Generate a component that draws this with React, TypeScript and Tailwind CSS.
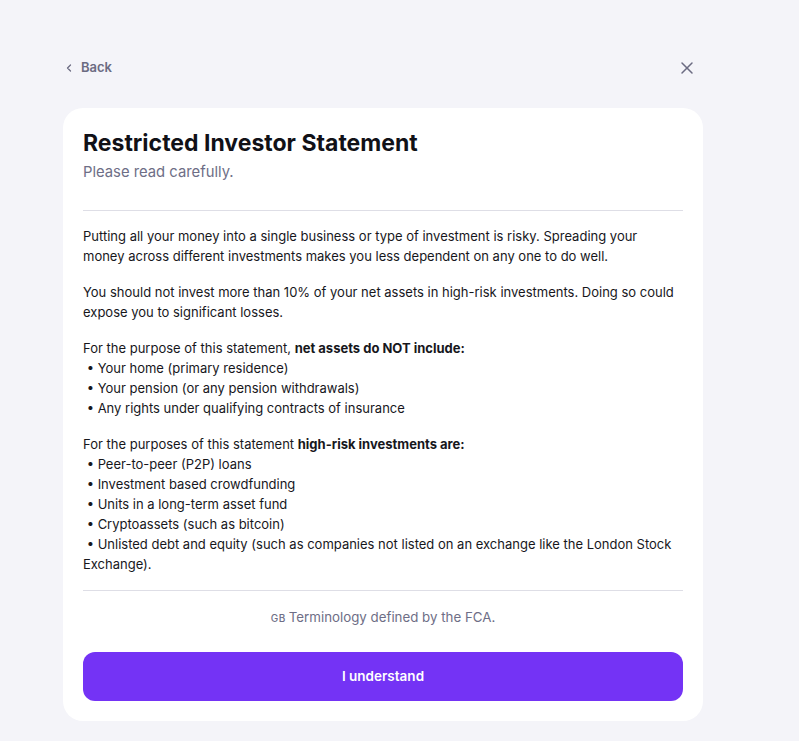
import { ChevronLeft, X } from "lucide-react";

const netAssets = [
  "Your home (primary residence)",
  "Your pension (or any pension withdrawals)",
  "Any rights under qualifying contracts of insurance",
];

const highRisk = [
  "Peer-to-peer (P2P) loans",
  "Investment based crowdfunding",
  "Units in a long-term asset fund",
  "Cryptoassets (such as bitcoin)",
  "Unlisted debt and equity (such as companies not listed on an exchange like the London Stock Exchange).",
];

export default function App() {
  return (
    <div
      className="min-h-[741px] bg-[#f4f4f9] pt-[56px] pb-5"
      style={{ fontFamily: "Inter, 'Noto Sans', sans-serif" }}
    >
      <div className="ml-[63px] w-[640px]">
        {/* Top bar */}
        <div className="flex h-[24px] items-center justify-between">
          <button className="flex items-center gap-[6px] text-[13px] font-semibold text-[#6b6b82]">
            <ChevronLeft size={12} strokeWidth={2.5} />
            Back
          </button>
          <X size={20} strokeWidth={1.8} className="mr-[6px] text-[#6b6b82]" />
        </div>

        {/* Card */}
        <div className="mt-[28px] rounded-[20px] bg-white px-5 pt-[20px] pb-5">
          <h1 className="text-[23px] font-bold leading-[30px] text-[#111117]">
            Restricted Investor Statement
          </h1>
          <p className="mt-[3px] text-[14.8px] leading-[22px] text-[#6e6e86]">
            Please read carefully.
          </p>

          <div className="mt-[27px] h-px bg-[#dedee6]" />

          <div className="mt-[15px] space-y-4 text-[13px] leading-[20px] text-[#17171c]">
            <p>
              Putting all your money into a single business or type of investment is risky. Spreading your
              <br />
              money across different investments makes you less dependent on any one to do well.
            </p>
            <p>
              You should not invest more than 10% of your net assets in high-risk investments. Doing so could
              <br />
              expose you to significant losses.
            </p>
            <div>
              <p>
                For the purpose of this statement, <strong className="font-bold">net assets do NOT include:</strong>
              </p>
              {netAssets.map((item) => (
                <p key={item}>&nbsp;• {item}</p>
              ))}
            </div>
            <div>
              <p>
                For the purposes of this statement <strong className="font-bold">high-risk investments are:</strong>
              </p>
              {highRisk.map((item) => (
                <p key={item}>&nbsp;• {item}</p>
              ))}
            </div>
          </div>

          <div className="mt-[16px] h-px bg-[#dedee6]" />

          <p className="mt-[16px] text-center text-[13.3px] leading-[20px] text-[#6e6e86]">
            <span className="mr-[3px] text-[10px] font-medium tracking-[0.5px]">GB</span>
            Terminology defined by the FCA.
          </p>

          <button className="mt-[24px] flex h-[49px] w-full items-center justify-center rounded-[12px] bg-[#7433f5] text-[13.5px] font-semibold text-white">
            I understand
          </button>
        </div>
      </div>
    </div>
  );
}
